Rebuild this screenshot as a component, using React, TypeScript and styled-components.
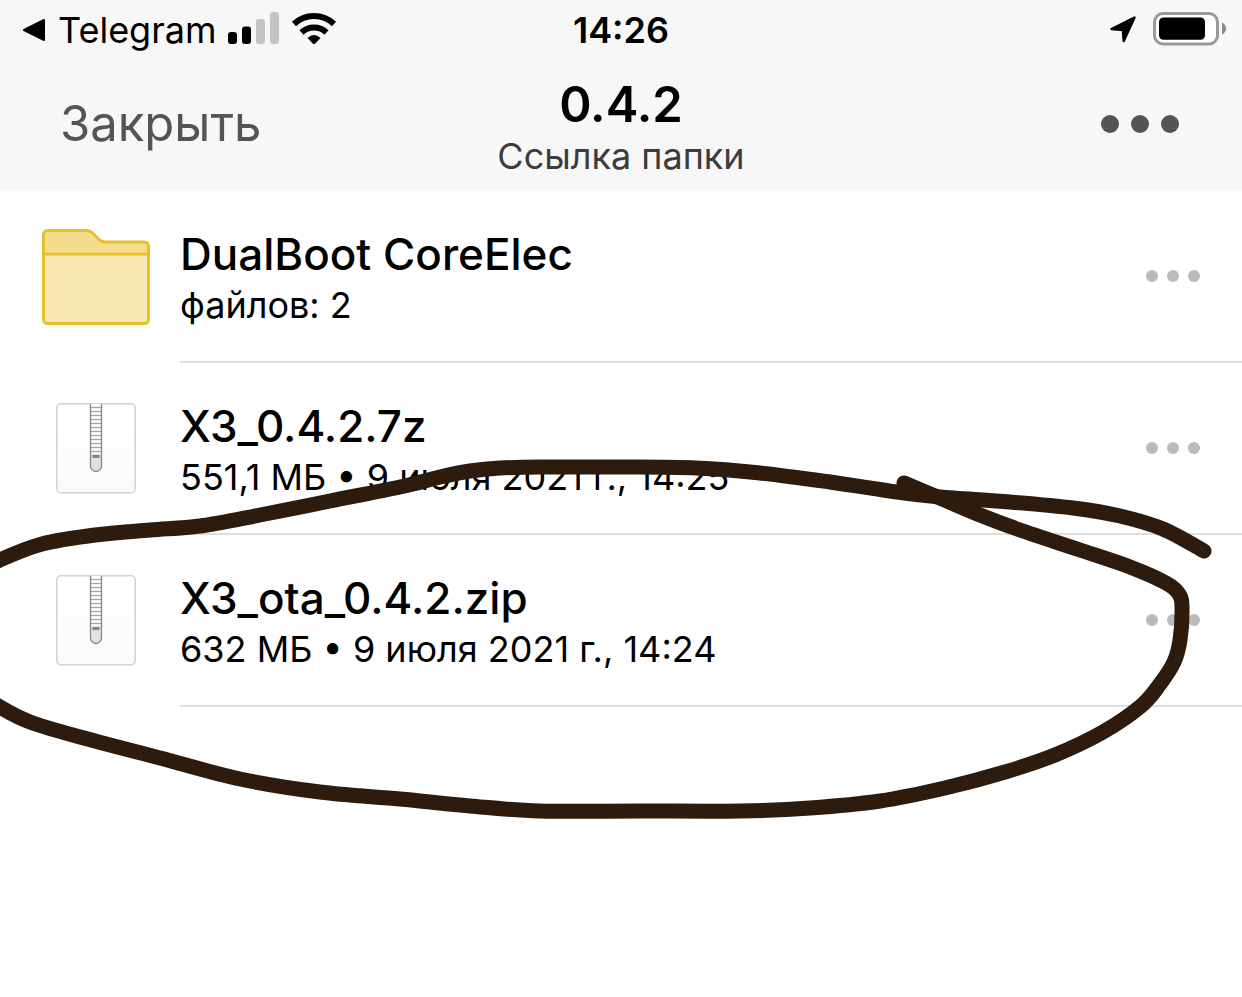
import React from "react";
import styled, { createGlobalStyle } from "styled-components";

const GlobalStyle = createGlobalStyle`
  * { box-sizing: border-box; }
  body {
    margin: 0;
    background: #fff;
    color: #000;
    font-family: Inter, "Liberation Sans", sans-serif;
  }
`;

const Page = styled.div`
  position: relative;
  min-height: 100vh;
  overflow: hidden;
`;

const Header = styled.header`
  background: #f7f7f7;
`;

const StatusBar = styled.div`
  display: grid;
  grid-template-columns: 1fr auto 1fr;
  align-items: center;
  height: 60px;
  padding: 0 16px;
  font-size: 36px;
  line-height: 60px;
`;

const StatusSide = styled.div<{ $end?: boolean }>`
  display: flex;
  align-items: center;
  justify-content: ${(p) => (p.$end ? "flex-end" : "flex-start")};
  gap: ${(p) => (p.$end ? 16 : 11)}px;
`;

const BackLink = styled.a`
  display: flex;
  align-items: center;
  gap: 12px;
  padding-left: 6px;
  color: inherit;
  text-decoration: none;
`;

const Clock = styled.time`
  font-weight: 600;
`;

const Icon = styled.svg`
  display: block;
  flex: none;
`;

const NavBar = styled.nav`
  display: grid;
  grid-template-columns: 1fr auto 1fr;
  align-items: center;
  height: 130px;
  padding: 0 60px 2px;
`;

const PlainButton = styled.button`
  padding: 0;
  border: 0;
  background: none;
  font: inherit;
  cursor: pointer;
`;

const CloseButton = styled(PlainButton)`
  justify-self: start;
  color: #545454;
  font-size: 49px;
  line-height: 66px;
`;

const MoreButton = styled(PlainButton)<{ $large?: boolean }>`
  display: flex;
  flex: none;
  justify-self: end;
  gap: ${(p) => (p.$large ? 12 : 9)}px;
  padding: 0 ${(p) => (p.$large ? 3 : 0)}px;
  color: ${(p) => (p.$large ? "#545454" : "#bbb")};
`;

const Dot = styled.span<{ $large?: boolean }>`
  width: ${(p) => (p.$large ? 18 : 12)}px;
  height: ${(p) => (p.$large ? 18 : 12)}px;
  border-radius: 50%;
  background: currentColor;
`;

const Heading = styled.div`
  padding-top: 8px;
  text-align: center;
`;

const Title = styled.h1`
  margin: 0;
  font-size: 49px;
  font-weight: 600;
  line-height: 56px;
`;

const Subtitle = styled.p`
  margin: 0;
  color: #3c3c3c;
  font-size: 36px;
  line-height: 46px;
`;

const FileList = styled.ul`
  margin: 0;
  padding: 1px 0 0 42px;
  list-style: none;
`;

const FileRow = styled.li`
  display: flex;
  gap: 30px;
  height: 172px;
`;

const IconCell = styled.div`
  display: flex;
  align-items: center;
  justify-content: center;
  width: 108px;
  padding-bottom: 1px;
`;

const RowBody = styled.div`
  display: flex;
  flex: 1;
  align-items: center;
  justify-content: space-between;
  padding-right: 42px;
  border-bottom: 2px solid #dedede;
`;

const FileText = styled.div`
  padding-top: 6px;
`;

const FileName = styled.h2`
  margin: 0;
  font-size: 44px;
  font-weight: 500;
  line-height: 52px;
`;

const FileMeta = styled.p`
  margin: 0;
  font-size: 36px;
  line-height: 50px;
`;

const Ink = styled.svg`
  position: absolute;
  top: 0;
  left: 0;
  width: 100%;
  height: auto;
  pointer-events: none;
`;

type Point = [number, number];

const upperStroke: Point[] = [
  [-30, 576], [0, 560], [42, 544], [95, 535], [150, 530], [200, 526],
  [260, 515], [330, 501], [400, 487], [440, 477], [470, 471], [500, 468],
  [540, 467], [620, 467], [696, 468], [760, 473], [830, 482], [897, 492],
  [940, 497], [1010, 502], [1073, 508], [1120, 516], [1163, 529], [1204, 551],
];

const lowerStroke: Point[] = [
  [904, 483], [940, 498], [980, 515], [1020, 530], [1080, 550], [1130, 567],
  [1166, 583], [1179, 594], [1182, 608], [1180, 640], [1174, 662],
  [1160, 684], [1141, 706], [1103, 732], [1055, 755], [1005, 772],
  [945, 788], [880, 801], [810, 808], [740, 811], [640, 811], [540, 811],
  [470, 806], [400, 799], [320, 792], [240, 779], [160, 758], [80, 737],
  [30, 722], [0, 707], [-30, 686],
];

/* Catmull-Rom spline through the pen points. */
function smoothPath(points: Point[]) {
  let d = `M${points[0].join(" ")}`;
  for (let i = 0; i < points.length - 1; i++) {
    const a = points[Math.max(i - 1, 0)];
    const b = points[i];
    const c = points[i + 1];
    const e = points[Math.min(i + 2, points.length - 1)];
    d += `C${b[0] + (c[0] - a[0]) / 6} ${b[1] + (c[1] - a[1]) / 6} ${c[0] - (e[0] - b[0]) / 6} ${c[1] - (e[1] - b[1]) / 6} ${c[0]} ${c[1]}`;
  }
  return d;
}

function Dots({ large, label }: { large?: boolean; label: string }) {
  return (
    <MoreButton type="button" $large={large} aria-label={label}>
      <Dot $large={large} />
      <Dot $large={large} />
      <Dot $large={large} />
    </MoreButton>
  );
}

function FolderIcon() {
  return (
    <Icon width="108" height="96" viewBox="0 0 108 96" aria-hidden="true">
      <path
        d="M1.5 25V6q0-4.500 4.500-4.500H44q4 0 7 3l6 6q3 2.500 6 2.500h39q4.500 0 4.500 4.500v7z"
        fill="#f5dd90"
      />
      <path d="M1.500 25h105v65q0 4.500-4.500 4.500H6q-4.500 0-4.500-4.500z" fill="#fae8b3" />
      <path
        d="M1.500 25h105M6 1.500H44q4 0 7 3l6 6q3 2.500 6 2.500h39q4.500 0 4.500 4.500V90q0 4.500-4.500 4.500H6q-4.500 0-4.500-4.500V6q0-4.500 4.500-4.500z"
        fill="none"
        stroke="#e7c02e"
        strokeWidth="3"
      />
    </Icon>
  );
}

function ArchiveIcon({ id }: { id: string }) {
  const teeth = Array.from({ length: 12 }, (_, i) => 4.5 + i * 4);
  return (
    <Icon width="80" height="91" viewBox="0 0 80 91" aria-hidden="true">
      <defs>
        <linearGradient id={id} x1="0" y1="0" x2="0" y2="1">
          <stop offset="0" stopColor="#fff" />
          <stop offset="1" stopColor="#fafafa" />
        </linearGradient>
      </defs>
      <rect x="0.75" y="0.75" width="78.500" height="89" rx="4" fill={`url(#${id})`} stroke="#d2d2d2" strokeWidth="1.500" />
      <path d="M34.500 1v62a5.500 5.500 0 0 0 11 0V1" fill="#fff" />
      <path d="M34.500 51v12a5.500 5.500 0 0 0 11 0V51z" fill="#e2e2e2" />
      {teeth.map((y) => (
        <path key={y} d={`M35 ${y}h10`} stroke="#a6a6a6" strokeWidth="1.400" />
      ))}
      <path d="M34.500 1v62a5.500 5.500 0 0 0 11 0V1" fill="none" stroke="#868686" strokeWidth="1.300" />
      <rect x="36.500" y="52" width="7" height="3" fill="#858585" />
    </Icon>
  );
}

const files = [
  { kind: "folder", name: "DualBoot CoreElec", meta: "файлов: 2" },
  { kind: "archive", name: "X3_0.4.2.7z", meta: "551,1 МБ • 9 июля 2021 г., 14:25" },
  { kind: "archive", name: "X3_ota_0.4.2.zip", meta: "632 МБ • 9 июля 2021 г., 14:24" },
];

export default function App() {
  return (
    <Page>
      <GlobalStyle />
      <Header>
        <StatusBar>
          <StatusSide>
            <BackLink href="#telegram">
              <Icon width="24" height="24" viewBox="0 0 24 24" aria-hidden="true">
                <path d="M2 12 22 2v20z" stroke="#000" strokeWidth="2" strokeLinejoin="round" />
              </Icon>
              Telegram
            </BackLink>
            <Icon width="52" height="38" viewBox="0 0 52 38" aria-hidden="true">
              <rect x="0" y="21" width="9" height="12" rx="3" />
              <rect x="14" y="15.500" width="9" height="17.500" rx="3" />
              <rect x="28" y="8" width="9" height="25" rx="3" fill="#c4c4c4" />
              <rect x="42" y="1" width="9" height="32" rx="3" fill="#c4c4c4" />
            </Icon>
            <Icon width="46" height="38" viewBox="0 0 46 38" aria-hidden="true">
              <g fill="none" stroke="#000" strokeWidth="6">
                <path d="M3 13a29 29 0 0 1 40 0" />
                <path d="M10.500 21.500a18 18 0 0 1 25 0" />
              </g>
              <path d="M16.500 27q6.500-6 13 0L24 32.700q-1 .9-2 0z" />
            </Icon>
          </StatusSide>
          <Clock>14:26</Clock>
          <StatusSide $end>
            <Icon width="28" height="28" viewBox="0 0 28 28" aria-hidden="true">
              <path d="M25.500 1.500 14.700 25 14 14 2.500 13z" stroke="#000" strokeWidth="2.500" strokeLinejoin="round" />
            </Icon>
            <Icon width="73" height="36" viewBox="0 0 73 36" aria-hidden="true">
              <rect x="1.500" y="1.500" width="63" height="30.500" rx="8.500" fill="#fff" stroke="#999" strokeWidth="3" />
              <rect x="6" y="5.500" width="46" height="22.300" rx="4.500" />
              <path d="M69 10.500q4 2 4 6t-4 6z" fill="#8a8a8a" />
            </Icon>
          </StatusSide>
        </StatusBar>
        <NavBar>
          <CloseButton type="button">Закрыть</CloseButton>
          <Heading>
            <Title>0.4.2</Title>
            <Subtitle>Ссылка папки</Subtitle>
          </Heading>
          <Dots large label="Меню" />
        </NavBar>
      </Header>
      <main>
        <FileList>
          {files.map((file, i) => (
            <FileRow key={file.name}>
              <IconCell>
                {file.kind === "folder" ? <FolderIcon /> : <ArchiveIcon id={`paper${i}`} />}
              </IconCell>
              <RowBody>
                <FileText>
                  <FileName>{file.name}</FileName>
                  <FileMeta>{file.meta}</FileMeta>
                </FileText>
                <Dots label={`Действия: ${file.name}`} />
              </RowBody>
            </FileRow>
          ))}
        </FileList>
      </main>
      <Ink viewBox="0 0 1242 997" aria-hidden="true">
        <g fill="none" stroke="#2d1b0e" strokeWidth="15" strokeLinecap="round" strokeLinejoin="round">
          <path d={smoothPath(upperStroke)} />
          <path d={smoothPath(lowerStroke)} />
        </g>
      </Ink>
    </Page>
  );
}
